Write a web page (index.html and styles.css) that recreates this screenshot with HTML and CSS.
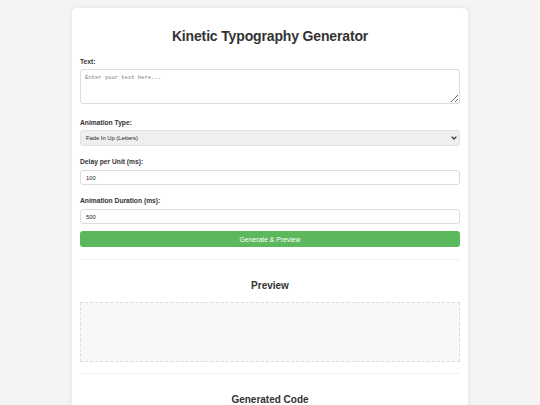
FILE: index.html
```html
<!DOCTYPE html>
<html>
<head>
<meta charset="utf-8">
<link rel="stylesheet" href="styles.css">
</head>
<body>
<div class="card">
  <h1 class="title">Kinetic Typography Generator</h1>
  <label class="label">Text:</label>
  <textarea class="textarea" placeholder="Enter your text here..."></textarea>
  <label class="label label-gap">Animation Type:</label>
  <div class="select-wrap">
    <select class="select"><option>Fade In Up (Letters)</option></select>
    <svg class="chev" width="6" height="4" viewBox="0 0 6 4"><path d="M0.6 0.6 L3 3 L5.4 0.6" fill="none" stroke="#333" stroke-width="1.3"/></svg>
  </div>
  <label class="label label-gap2">Delay per Unit (ms):</label>
  <input class="input" type="text" value="100">
  <label class="label label-gap2">Animation Duration (ms):</label>
  <input class="input" type="text" value="500">
  <button class="btn">Generate &amp; Preview</button>
  <hr class="divider">
  <h2 class="heading">Preview</h2>
  <div class="preview"></div>
  <hr class="divider divider2">
  <h2 class="heading heading2">Generated Code</h2>
</div>
</body>
</html>
```
FILE: styles.css
```css
html, body {
  margin: 0;
  padding: 0;
  background: #f4f4f4;
  font-family: "Liberation Sans", Arial, sans-serif;
  color: #333;
  overflow: hidden;
}
body {
  padding-top: 8px;
}
.card {
  width: 380px;
  margin: 0 auto;
  background: #fff;
  border-radius: 5px;
  box-shadow: 0 0 6px rgba(0,0,0,0.08);
  padding: 8px 8px 40px;
  display: flex;
  flex-direction: column;
  height: 420px;
}
.title {
  margin: 10px 0 0;
  font-size: 14px;
  line-height: 20px;
  letter-spacing: -0.15px;
  text-align: center;
  font-weight: bold;
  color: #333;
}
.label {
  display: block;
  font-size: 6.7px;
  line-height: 10px;
  font-weight: bold;
  color: #333;
  margin-top: 11px;
  margin-bottom: 2px;
}
.label-gap { margin-top: 14px; margin-bottom: 2px; }
.label-gap2 { margin-top: 11px; margin-bottom: 3px; }
.textarea {
  box-sizing: border-box;
  width: 100%;
  height: 35px;
  margin: 0;
  border: 1px solid #ddd;
  border-radius: 3px;
  padding: 4px 4px;
  font-family: "Liberation Mono", monospace;
  font-size: 5.5px;
  resize: vertical;
}
.textarea::placeholder { color: #777; }
.select-wrap {
  position: relative;
}
.select {
  box-sizing: border-box;
  width: 100%;
  height: 16px;
  margin: 0;
  border: 1px solid #e2e2e2;
  border-radius: 3px;
  background: #efefef;
  font-family: "Liberation Sans", Arial, sans-serif;
  font-size: 5.8px;
  padding: 0 5px;
  color: #222;
  appearance: none;
  -webkit-appearance: none;
  display: block;
}
.chev {
  position: absolute;
  right: 3px;
  top: 6px;
}
.input {
  box-sizing: border-box;
  width: 100%;
  height: 15px;
  margin: 0;
  border: 1px solid #ddd;
  border-radius: 3px;
  background: #fff;
  font-family: "Liberation Sans", Arial, sans-serif;
  font-size: 5.8px;
  padding: 0 5px;
  color: #222;
}
.btn {
  margin-top: 7px;
  width: 100%;
  height: 16px;
  border: none;
  border-radius: 3px;
  background: #5cb85c;
  color: #fff;
  font-family: "Liberation Sans", Arial, sans-serif;
  font-size: 6.8px;
  padding: 0;
}
.divider {
  border: none;
  border-top: 1px solid #f0f0f0;
  margin: 12px 0 0;
  width: 100%;
}
.heading {
  margin: 19px 0 0;
  font-size: 10px;
  line-height: 14px;
  text-align: center;
  font-weight: bold;
  color: #333;
}
.preview {
  box-sizing: border-box;
  margin-top: 9px;
  height: 60px;
  border: 1px dashed #ddd;
  background: #f8f8f8;
}
.divider2 { margin-top: 11px; }
.heading2 { margin-top: 19px; }
```
